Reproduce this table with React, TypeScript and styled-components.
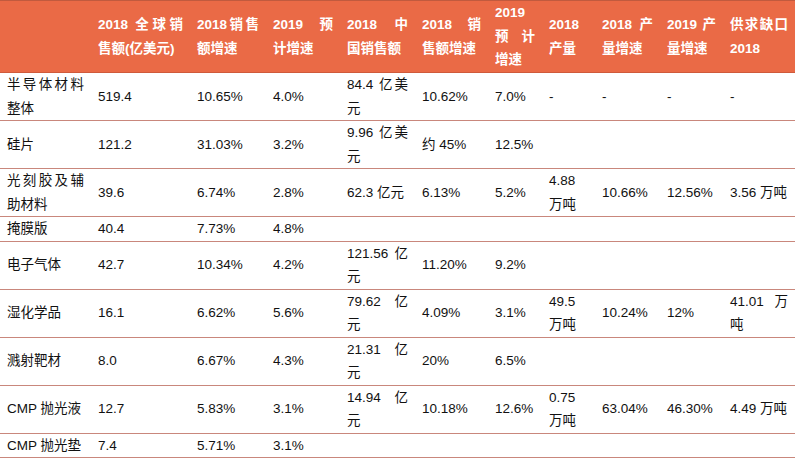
import React from 'react';
import styled, { createGlobalStyle } from 'styled-components';

const GlobalStyle = createGlobalStyle`
  html, body {
    margin: 0;
    padding: 0;
    background: #ffffff;
  }
`;

const Table = styled.table`
  width: 795px;
  table-layout: fixed;
  border-collapse: collapse;
  font-family: "Liberation Sans", Arial, "Noto Sans CJK SC", sans-serif;
  font-size: 13.5px;
  color: #111111;
`;

const HeadRow = styled.tr`
  background: #ea6a46;
  border-top: 1px solid #c15a3e;
  border-bottom: 1px solid #cf5a3b;
`;

const HeadCell = styled.th`
  padding: 0 7px;
  height: 71px;
  line-height: 23.5px;
  font-weight: 700;
  color: #ffffff;
  text-align: left;
  vertical-align: middle;
`;

const BodyRow = styled.tr`
  border-bottom: 1px solid #c9877c;
`;

const Cell = styled.td`
  padding: 0 7px;
  line-height: 23.5px;
  vertical-align: middle;
  text-align: left;
  white-space: nowrap;
`;

const Line = styled.span<{ $spread?: boolean }>`
  display: block;
  text-align: ${p => (p.$spread ? 'justify' : 'left')};
  text-align-last: ${p => (p.$spread ? 'justify' : 'left')};
`;

const widths = [91, 99, 76, 74, 75, 73, 54, 53, 65, 63, 72];

const headers = [
    '',
    '2018 全球销\n售额(亿美元)',
    '2018销售\n额增速',
    '2019 预\n计增速',
    '2018 中\n国销售额',
    '2018 销\n售额增速',
    '2019\n预计\n增速',
    '2018\n产量',
    '2018 产\n量增速',
    '2019产\n量增速',
    '供求缺口\n2018',
];

const rows: string[][] = [
    ['半导体材料\n整体', '519.4', '10.65%', '4.0%', '84.4 亿美\n元', '10.62%', '7.0%', '-', '-', '-', '-'],
    ['硅片', '121.2', '31.03%', '3.2%', '9.96 亿美\n元', '约 45%', '12.5%', '', '', '', ''],
    ['光刻胶及辅\n助材料', '39.6', '6.74%', '2.8%', '62.3 亿元', '6.13%', '5.2%', '4.88\n万吨', '10.66%', '12.56%', '3.56 万吨'],
    ['掩膜版', '40.4', '7.73%', '4.8%', '', '', '', '', '', '', ''],
    ['电子气体', '42.7', '10.34%', '4.2%', '121.56 亿\n元', '11.20%', '9.2%', '', '', '', ''],
    ['湿化学品', '16.1', '6.62%', '5.6%', '79.62 亿\n元', '4.09%', '3.1%', '49.5\n万吨', '10.24%', '12%', '41.01 万\n吨'],
    ['溅射靶材', '8.0', '6.67%', '4.3%', '21.31 亿\n元', '20%', '6.5%', '', '', '', ''],
    ['CMP 抛光液', '12.7', '5.83%', '3.1%', '14.94 亿\n元', '10.18%', '12.6%', '0.75\n万吨', '63.04%', '46.30%', '4.49 万吨'],
    ['CMP 抛光垫', '7.4', '5.71%', '3.1%', '', '', '', '', '', '', ''],
];

const Lines = ({ text }: { text: string }) => {
    const parts = text.split('\n');
    return (
        <>
            {parts.map((part, i) => (
                <Line key={i} $spread={i < parts.length - 1}>{part || '\u00a0'}</Line>
            ))}
        </>
    );
};

const App = () => {
    return (
        <>
            <GlobalStyle/>
            <Table>
                <colgroup>
                    {widths.map((w, i) => <col key={i} style={{ width: w }}/>)}
                </colgroup>
                <thead>
                    <HeadRow>
                        {headers.map((h, i) => (
                            <HeadCell key={i}><Lines text={h}/></HeadCell>
                        ))}
                    </HeadRow>
                </thead>
                <tbody>
                    {rows.map((row, r) => (
                        <BodyRow key={r}>
                            {row.map((cell, c) => (
                                <Cell key={c}><Lines text={cell}/></Cell>
                            ))}
                        </BodyRow>
                    ))}
                </tbody>
            </Table>
        </>
    );
};

export default App;
